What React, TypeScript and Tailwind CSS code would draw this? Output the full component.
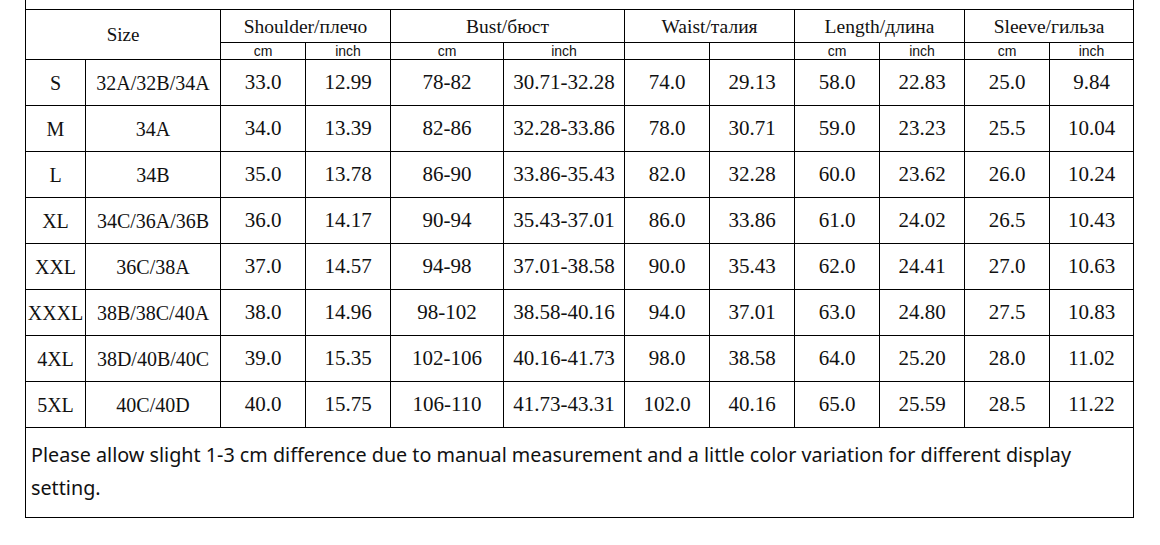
import React from "react";

const rows: string[][] = [
  ["S", "32A/32B/34A", "33.0", "12.99", "78-82", "30.71-32.28", "74.0", "29.13", "58.0", "22.83", "25.0", "9.84"],
  ["M", "34A", "34.0", "13.39", "82-86", "32.28-33.86", "78.0", "30.71", "59.0", "23.23", "25.5", "10.04"],
  ["L", "34B", "35.0", "13.78", "86-90", "33.86-35.43", "82.0", "32.28", "60.0", "23.62", "26.0", "10.24"],
  ["XL", "34C/36A/36B", "36.0", "14.17", "90-94", "35.43-37.01", "86.0", "33.86", "61.0", "24.02", "26.5", "10.43"],
  ["XXL", "36C/38A", "37.0", "14.57", "94-98", "37.01-38.58", "90.0", "35.43", "62.0", "24.41", "27.0", "10.63"],
  ["XXXL", "38B/38C/40A", "38.0", "14.96", "98-102", "38.58-40.16", "94.0", "37.01", "63.0", "24.80", "27.5", "10.83"],
  ["4XL", "38D/40B/40C", "39.0", "15.35", "102-106", "40.16-41.73", "98.0", "38.58", "64.0", "25.20", "28.0", "11.02"],
  ["5XL", "40C/40D", "40.0", "15.75", "106-110", "41.73-43.31", "102.0", "40.16", "65.0", "25.59", "28.5", "11.22"],
];

const colWidths = [60, 135, 85, 85, 113, 121, 85, 85, 85, 85, 85, 84];

const heads = ["Shoulder/плечо", "Bust/бюст", "Waist/талия", "Length/длина", "Sleeve/гильза"];
const subs = ["cm", "inch", "cm", "inch", "", "", "cm", "inch", "cm", "inch"];

export default function App() {
  return (
    <div className="w-[1160px] h-[545px] bg-white overflow-hidden">
      <div className="ml-[25px] w-[1109px]">
        <div className="h-[9px] border-x border-black" />
        <table
          className="w-[1109px] table-fixed border-collapse text-[#111]"
          style={{ fontFamily: '"Liberation Serif", "Times New Roman", serif' }}
        >
          <colgroup>
            {colWidths.map((w, i) => (
              <col key={i} style={{ width: w }} />
            ))}
          </colgroup>
          <tbody>
            <tr className="h-[33px]">
              <td colSpan={2} rowSpan={2} className="border border-black text-center text-[19px] p-0 pt-[2px]">
                Size
              </td>
              {heads.map((h) => (
                <td key={h} colSpan={2} className="border border-black text-center text-[19.5px] p-0 pt-[2px] leading-none">
                  {h}
                </td>
              ))}
            </tr>
            <tr className="h-[17px]">
              {subs.map((s, i) => (
                <td
                  key={i}
                  className="border border-black text-center text-[14px] leading-none p-0 pb-[1px]"
                  style={{ fontFamily: '"Liberation Sans", Arial, sans-serif' }}
                >
                  {s}
                </td>
              ))}
            </tr>
            {rows.map((r) => (
              <tr key={r[0]} className="h-[46px]">
                {r.map((c, i) => (
                  <td
                    key={i}
                    className={
                      i < 2
                        ? "border border-black text-center text-[20px] leading-none p-0 whitespace-nowrap"
                        : "border border-black text-center text-[21px] leading-none p-0 whitespace-nowrap"
                    }
                  >
                    {c}
                  </td>
                ))}
              </tr>
            ))}
          </tbody>
        </table>
        <div
          className="h-[90px] border-x border-b border-black pl-[5px] pt-[10px] text-[19.75px] leading-[33px] text-[#111]"
          style={{ fontFamily: '"Noto Sans", "Open Sans", sans-serif' }}
        >
          Please allow slight 1-3 cm difference due to manual measurement and a little color variation for different display setting.
        </div>
      </div>
    </div>
  );
}
